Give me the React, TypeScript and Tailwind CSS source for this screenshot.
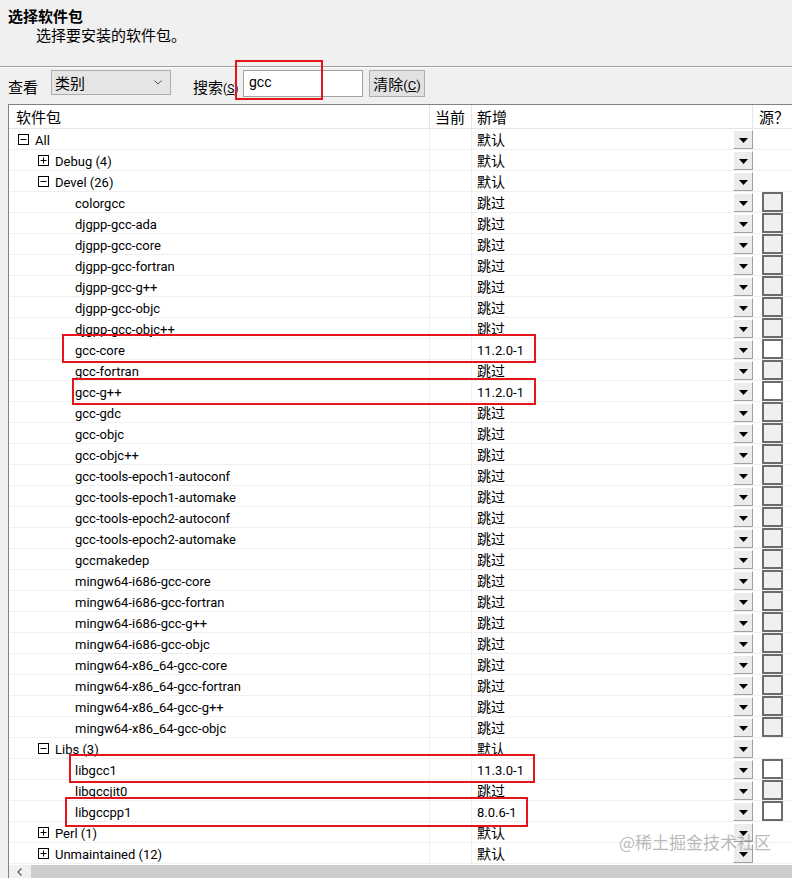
import React from 'react';

type Row = {
  name: string;
  depth: number;
  expander?: '+' | '-';
  action: string;
  check?: 'gray' | 'white';
};

const LATIN = "font-['Roboto','Noto_Sans_CJK_SC',sans-serif]";
const CJK = "font-['Noto_Sans_CJK_SC',sans-serif]";

const leaves = (names: string[]): Row[] =>
  names.map(n => ({ name: n, depth: 2, action: '跳过', check: 'gray' as const }));

const rows: Row[] = [
  { name: 'All', depth: 0, expander: '-', action: '默认' },
  { name: 'Debug (4)', depth: 1, expander: '+', action: '默认' },
  { name: 'Devel (26)', depth: 1, expander: '-', action: '默认' },
  ...leaves([
    'colorgcc',
    'djgpp-gcc-ada',
    'djgpp-gcc-core',
    'djgpp-gcc-fortran',
    'djgpp-gcc-g++',
    'djgpp-gcc-objc',
    'djgpp-gcc-objc++',
  ]),
  { name: 'gcc-core', depth: 2, action: '11.2.0-1', check: 'white' },
  { name: 'gcc-fortran', depth: 2, action: '跳过', check: 'gray' },
  { name: 'gcc-g++', depth: 2, action: '11.2.0-1', check: 'white' },
  ...leaves([
    'gcc-gdc',
    'gcc-objc',
    'gcc-objc++',
    'gcc-tools-epoch1-autoconf',
    'gcc-tools-epoch1-automake',
    'gcc-tools-epoch2-autoconf',
    'gcc-tools-epoch2-automake',
    'gccmakedep',
    'mingw64-i686-gcc-core',
    'mingw64-i686-gcc-fortran',
    'mingw64-i686-gcc-g++',
    'mingw64-i686-gcc-objc',
    'mingw64-x86_64-gcc-core',
    'mingw64-x86_64-gcc-fortran',
    'mingw64-x86_64-gcc-g++',
    'mingw64-x86_64-gcc-objc',
  ]),
  { name: 'Libs (3)', depth: 1, expander: '-', action: '默认' },
  { name: 'libgcc1', depth: 2, action: '11.3.0-1', check: 'white' },
  { name: 'libgccjit0', depth: 2, action: '跳过', check: 'gray' },
  { name: 'libgccpp1', depth: 2, action: '8.0.6-1', check: 'white' },
  { name: 'Perl (1)', depth: 1, expander: '+', action: '默认' },
  { name: 'Unmaintained (12)', depth: 1, expander: '+', action: '默认' },
];

const Expander = ({ kind }: { kind: '+' | '-' }) => (
  <svg width="11" height="11" viewBox="0 0 11 11" className="shrink-0">
    <rect x="0.5" y="0.5" width="10" height="10" fill="white" stroke="#000" />
    <line x1="2.5" y1="5.5" x2="8.5" y2="5.5" stroke="#000" />
    {kind === '+' && <line x1="5.5" y1="2.5" x2="5.5" y2="8.5" stroke="#000" />}
  </svg>
);

const DropButton = () => (
  <div className="w-[20px] h-[19px] bg-[#ececec] border border-t-white border-l-white border-r-[#a0a0a0] border-b-[#a0a0a0] flex items-end justify-center pb-[5px]">
    <svg width="9" height="5" viewBox="0 0 9 5">
      <path d="M0 0 H9 L4.5 5 Z" fill="#000" />
    </svg>
  </div>
);

const TreeRow = ({ row }: { row: Row }) => {
  const isVersion = /^\d/.test(row.action);
  // leaves have no expander box, so their text lines up one box+gap further in
  const pad = 8 + row.depth * 20 + (row.expander ? 0 : 17);
  const label = <span className={`${LATIN} text-[13px] leading-none mt-[2px]`}>{row.name}</span>;
  return (
    <div className="flex h-[21px] border-b border-[#f0f0f0] text-black">
      <div className="w-[420px] flex items-center border-r border-[#f0f0f0]" style={{ paddingLeft: pad }}>
        {row.expander ? (
          <span className="flex items-center gap-[6px]">
            <Expander kind={row.expander} />
            {label}
          </span>
        ) : (
          label
        )}
      </div>
      <div className="w-[42px] border-r border-[#f0f0f0]" />
      <div className="w-[281px] flex items-center justify-between pl-[5px]">
        <span className={`${isVersion ? LATIN + ' text-[13px] mt-[2px]' : CJK + ' text-[14px]'} leading-none`}>
          {row.action}
        </span>
        <DropButton />
      </div>
      <div className="flex-1 flex items-center pl-[9px]">
        {row.check && (
          <div
            className={`w-[21px] h-[20px] border-2 border-[#6b6b6b] ${row.check === 'white' ? 'bg-white' : 'bg-[#f0f0f0]'}`}
          />
        )}
      </div>
    </div>
  );
};

const RedBox = ({ x, y, w, h }: { x: number; y: number; w: number; h: number }) => (
  <div
    className="absolute border-2 border-[#e8141c] pointer-events-none"
    style={{ left: x, top: y, width: w, height: h }}
  />
);

export default function App() {
  return (
    <div className={`relative w-[792px] h-[878px] overflow-hidden bg-[#f0f0f0] ${CJK}`}>
      {/* header */}
      <div className="h-[66px] pl-[8px] pt-[6px]">
        <div className="text-[15px] font-bold leading-[19px] text-black">选择软件包</div>
        <div className="pl-[28px] text-[15px] leading-[19px] text-black">选择要安装的软件包。</div>
      </div>
      <div className="h-[2px] border-t border-[#a0a0a0] border-b border-b-white" />

      {/* toolbar */}
      <div className="flex items-start h-[36px] pl-[8px] pt-[2px]">
        <span className="text-[15px] leading-none mt-[9px] w-[43px]">查看</span>
        <div className="w-[120px] h-[25px] bg-[#e5e5e5] border border-[#adadad] flex items-center justify-between pl-[3px] pr-[8px]">
          <span className="text-[15px] leading-none">类别</span>
          <svg width="8" height="5" viewBox="0 0 8 5">
            <path d="M0.5 0.5 L4 4 L7.5 0.5" fill="none" stroke="#555" />
          </svg>
        </div>
        <span className="ml-[22px] mt-[9px] text-[15px] leading-none w-[50px] whitespace-nowrap">
          搜索<span className={`${LATIN} text-[12px]`}>(<u>S</u>)</span>
        </span>
        <div className="w-[120px] h-[27px] bg-white border border-[#a0a0a0] flex items-center pl-[5px] pb-[4px]">
          <span className={`${LATIN} text-[14px] leading-none`}>gcc</span>
        </div>
        <div className="ml-[6px] w-[56px] h-[27px] bg-[#e1e1e1] border border-[#adadad] flex items-center justify-center">
          <span className="text-[15px] leading-none whitespace-nowrap">
            清除<span className={`${LATIN} text-[13px]`}>(<u>C</u>)</span>
          </span>
        </div>
      </div>

      {/* list */}
      <div className="ml-[8px] bg-white border-l border-t border-[#828282]">
        <div className="flex h-[24px] border-b border-[#e5e5e5] bg-white">
          <div className="w-[421px] flex items-center pl-[7px] border-r border-[#e5e5e5]">
            <span className="text-[15px] leading-none">软件包</span>
          </div>
          <div className="w-[42px] flex items-center pl-[5px] border-r border-[#e5e5e5]">
            <span className="text-[15px] leading-none">当前</span>
          </div>
          <div className="w-[281px] flex items-center pl-[5px] border-r border-[#e5e5e5]">
            <span className="text-[15px] leading-none">新增</span>
          </div>
          <div className="flex-1 flex items-center pl-[6px]">
            <span className="text-[15px] leading-none whitespace-nowrap">源？</span>
          </div>
        </div>
        <div className="pl-[1px]">
          {rows.map((r, i) => (
            <TreeRow key={i} row={r} />
          ))}
        </div>
        {/* horizontal scrollbar */}
        <div className="flex h-[14px] mt-[1px]">
          <div className="w-[22px] bg-[#f0f0f0] flex items-center justify-center">
            <svg width="6" height="8" viewBox="0 0 6 8">
              <path d="M4.5 0.5 L1 4 L4.5 7.5" fill="none" stroke="#606060" strokeWidth="1.3" />
            </svg>
          </div>
          <div className="flex-1 bg-[#cdcdcd]" />
        </div>
      </div>

      {/* annotations */}
      <RedBox x={235} y={60} w={88} h={40} />
      <RedBox x={62} y={334} w={474} h={29} />
      <RedBox x={72} y={378} w={464} h={27} />
      <RedBox x={69} y={754} w={466} h={29} />
      <RedBox x={65} y={797} w={463} h={30} />

      <div className="absolute left-[619px] top-[833px] text-[17px] leading-none text-[#9a9a9a]/70 whitespace-nowrap">
        @稀土掘金技术社区
      </div>
    </div>
  );
}
